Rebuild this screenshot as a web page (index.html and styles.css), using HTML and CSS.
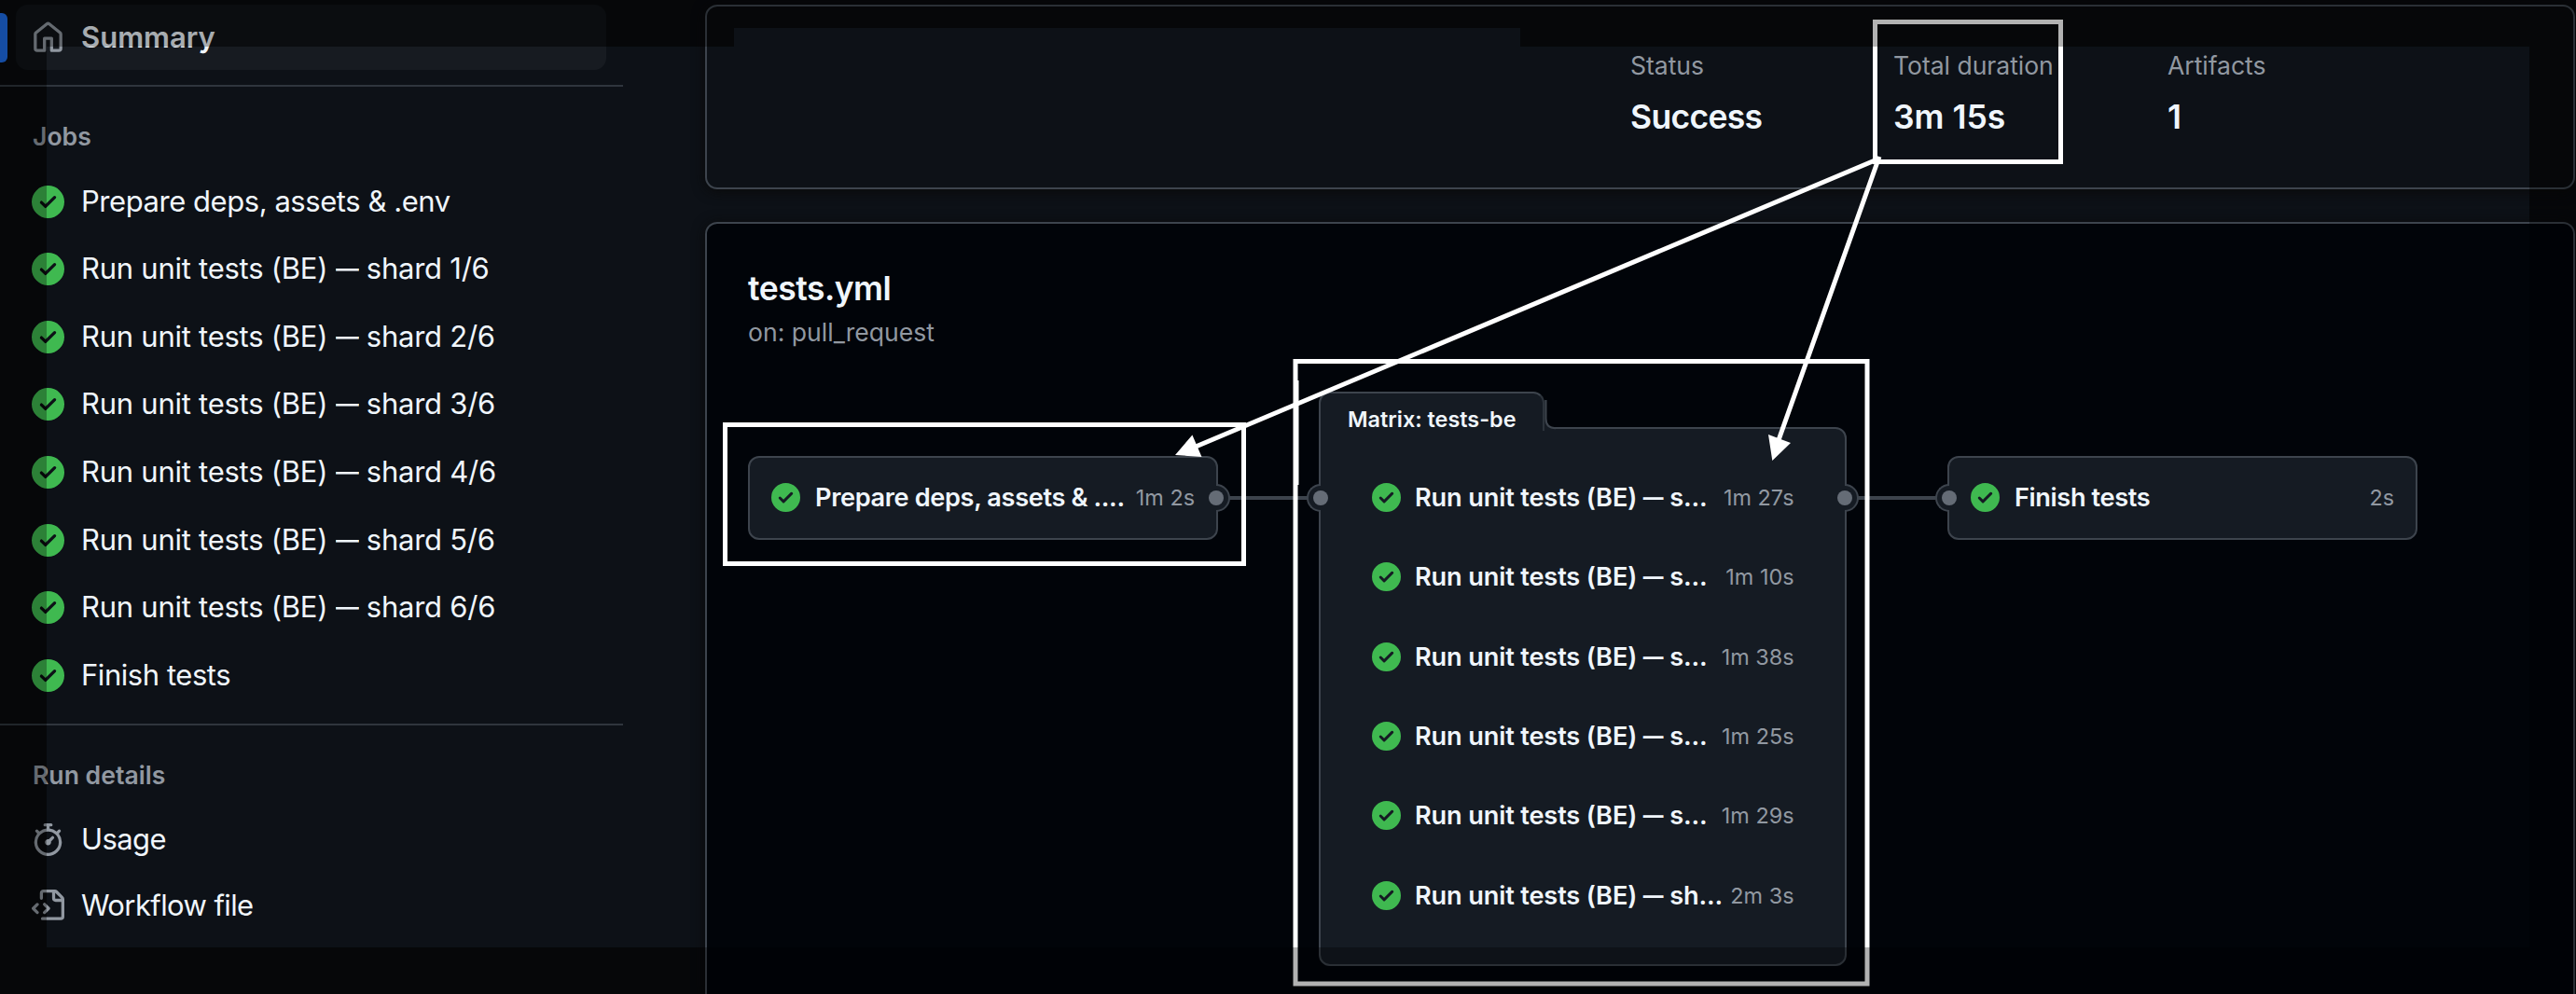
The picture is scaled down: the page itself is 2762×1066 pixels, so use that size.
FILE: index.html
```html
<!DOCTYPE html>
<html lang="en">
<head>
<meta charset="utf-8">
<title>Workflow run</title>
<link rel="stylesheet" href="styles.css">
</head>
<body>
<svg class="defs" aria-hidden="true">
  <symbol id="home" viewBox="0 0 16 16"><path d="M6.906.664a1.749 1.749 0 0 1 2.187 0l5.25 4.2c.415.332.657.835.657 1.367v7.019A1.75 1.75 0 0 1 13.25 15h-3.5a.75.75 0 0 1-.75-.75V9H7v5.25a.75.75 0 0 1-.75.75h-3.5A1.75 1.75 0 0 1 1 13.25V6.23c0-.531.242-1.034.657-1.366l5.25-4.2Zm1.25 1.171a.25.25 0 0 0-.312 0l-5.25 4.2a.25.25 0 0 0-.094.196v7.019c0 .138.112.25.25.25H5.5V8.25a.75.75 0 0 1 .75-.75h3.5a.75.75 0 0 1 .75.75v5.25h2.75a.25.25 0 0 0 .25-.25V6.23a.25.25 0 0 0-.094-.195Z"/></symbol>
  <symbol id="check" viewBox="0 0 16 16"><path d="M8 16A8 8 0 1 1 8 0a8 8 0 0 1 0 16Zm3.78-9.72a.751.751 0 0 0-.018-1.042.751.751 0 0 0-1.042-.018L6.75 9.19 5.28 7.72a.751.751 0 0 0-1.042.018.751.751 0 0 0-.018 1.042l2 2a.75.75 0 0 0 1.06 0Z"/></symbol>
  <symbol id="stopwatch" viewBox="0 0 16 16"><path d="M5.75.75A.75.75 0 0 1 6.5 0h3a.75.75 0 0 1 0 1.5h-.75v1l-.001.041a6.724 6.724 0 0 1 3.464 1.435l.007-.006.75-.75a.749.749 0 0 1 1.275.326.749.749 0 0 1-.215.734l-.75.75-.006.007a6.75 6.75 0 1 1-10.548 0L2.72 5.03l-.75-.75a.751.751 0 0 1 .018-1.042.751.751 0 0 1 1.042-.018l.75.75.007.006A6.72 6.72 0 0 1 7.25 2.541V1.5H6.5a.75.75 0 0 1-.75-.75ZM8 14.5a5.25 5.25 0 1 0-.001-10.501A5.25 5.25 0 0 0 8 14.5Zm.389-6.7 1.33-1.33a.75.75 0 1 1 1.061 1.06L9.45 8.861A1.503 1.503 0 0 1 8 10.75a1.499 1.499 0 1 1 .389-2.95Z"/></symbol>
  <symbol id="file-code" viewBox="0 0 16 16"><path d="M4 1.75C4 .784 4.784 0 5.75 0h5.586c.464 0 .909.184 1.237.513l2.914 2.914c.329.328.513.773.513 1.237v8.586A1.75 1.75 0 0 1 14.25 15h-9a.75.75 0 0 1 0-1.5h9a.25.25 0 0 0 .25-.25V6h-2.75A1.75 1.75 0 0 1 10 4.25V1.5H5.75a.25.25 0 0 0-.25.25v2.5a.75.75 0 0 1-1.5 0Zm1.72 4.97a.75.75 0 0 1 1.06 0l2 2a.75.75 0 0 1 0 1.06l-2 2a.749.749 0 0 1-1.275-.326.749.749 0 0 1 .215-.734l1.47-1.47-1.47-1.47a.75.75 0 0 1 0-1.06ZM3.28 7.78 1.81 9.25l1.47 1.47a.751.751 0 0 1-.018 1.042.751.751 0 0 1-1.042.018l-2-2a.75.75 0 0 1 0-1.06l2-2a.751.751 0 0 1 1.042.018.751.751 0 0 1 .018 1.042Zm8.22-6.218V4.25c0 .138.112.25.25.25h2.688l-.011-.013-2.914-2.914-.013-.011Z"/></symbol>
</svg>

<aside class="sidebar">
  <a class="summary"><svg class="icon"><use href="#home"/></svg><span>Summary</span></a>
  <hr class="rule">
  <h2 class="heading">Jobs</h2>
  <ul class="list jobs">
    <li><svg class="icon ok"><use href="#check"/></svg><span>Prepare deps, assets &amp; .env</span></li>
    <li class="shard"><svg class="icon ok"><use href="#check"/></svg><span>Run unit tests (BE) <b class="dash">—</b> shard 1/6</span></li>
    <li class="shard"><svg class="icon ok"><use href="#check"/></svg><span>Run unit tests (BE) <b class="dash">—</b> shard 2/6</span></li>
    <li class="shard"><svg class="icon ok"><use href="#check"/></svg><span>Run unit tests (BE) <b class="dash">—</b> shard 3/6</span></li>
    <li class="shard"><svg class="icon ok"><use href="#check"/></svg><span>Run unit tests (BE) <b class="dash">—</b> shard 4/6</span></li>
    <li class="shard"><svg class="icon ok"><use href="#check"/></svg><span>Run unit tests (BE) <b class="dash">—</b> shard 5/6</span></li>
    <li class="shard"><svg class="icon ok"><use href="#check"/></svg><span>Run unit tests (BE) <b class="dash">—</b> shard 6/6</span></li>
    <li><svg class="icon ok"><use href="#check"/></svg><span>Finish tests</span></li>
  </ul>
  <hr class="rule">
  <h2 class="heading">Run details</h2>
  <ul class="list details">
    <li><svg class="icon"><use href="#stopwatch"/></svg><span>Usage</span></li>
    <li><svg class="icon"><use href="#file-code"/></svg><span>Workflow file</span></li>
  </ul>
</aside>

<main class="main">
  <section class="card stats">
    <div class="stat"><div class="label">Status</div><div class="value tight">Success</div></div>
    <div class="stat"><div class="label">Total duration</div><div class="value">3m 15s</div></div>
    <div class="stat"><div class="label">Artifacts</div><div class="value">1</div></div>
  </section>

  <section class="card workflow">
    <h1 class="title">tests.yml</h1>
    <p class="trigger">on: pull_request</p>
  </section>
</main>

<div class="graph">
  <div class="link link-a"></div>
  <div class="link link-b"></div>
  <div class="node prepare">
    <i class="port right"></i>
    <div class="job"><svg class="icon ok"><use href="#check"/></svg><span class="name">Prepare deps, assets &amp; ....</span><span class="time">1m 2s</span></div>
  </div>
  <div class="node matrix">
    <div class="tab">Matrix: tests-be</div>
    <svg class="notch" viewBox="0 0 14 32"><path class="fill" d="M0 0H1V20Q1 30 12 30V32H0Z"/><path class="edge" d="M1.5 0V20Q1.5 30.2 12 30.2"/></svg>
    <i class="port left"></i><i class="port right"></i>
    <div class="job shard"><svg class="icon ok"><use href="#check"/></svg><span class="name">Run unit tests (BE) <b class="dash">—</b> s...</span><span class="time">1m 27s</span></div>
    <div class="job shard"><svg class="icon ok"><use href="#check"/></svg><span class="name">Run unit tests (BE) <b class="dash">—</b> s...</span><span class="time">1m 10s</span></div>
    <div class="job shard"><svg class="icon ok"><use href="#check"/></svg><span class="name">Run unit tests (BE) <b class="dash">—</b> s...</span><span class="time">1m 38s</span></div>
    <div class="job shard"><svg class="icon ok"><use href="#check"/></svg><span class="name">Run unit tests (BE) <b class="dash">—</b> s...</span><span class="time">1m 25s</span></div>
    <div class="job shard"><svg class="icon ok"><use href="#check"/></svg><span class="name">Run unit tests (BE) <b class="dash">—</b> s...</span><span class="time">1m 29s</span></div>
    <div class="job shard"><svg class="icon ok"><use href="#check"/></svg><span class="name">Run unit tests (BE) <b class="dash">—</b> sh...</span><span class="time">2m 3s</span></div>
  </div>
  <div class="node finish">
    <i class="port left"></i>
    <div class="job"><svg class="icon ok"><use href="#check"/></svg><span class="name">Finish tests</span><span class="time">2s</span></div>
  </div>
</div>

<svg class="marks" viewBox="0 0 2762 1066">
  <g fill="none" stroke="#fff" stroke-width="5">
    <rect x="2010.5" y="23.5" width="199" height="150"/>
    <rect x="777.5" y="455.5" width="556" height="149"/>
    <rect x="1389" y="387.5" width="613" height="667.5"/>
    <path d="M2015 170 1282 479M2015 168 1907 472"/>
    <path d="M1391.5 408V520" stroke-width="2"/>
  </g>
  <path fill="#fff" d="M1260 488 1278.4 466.5 1288.5 490ZM1900.3 494 1896 466 1920 475Z"/>
</svg>
<svg class="shade" viewBox="0 0 2762 1066"><path fill-rule="evenodd" d="M0 0H2762V1066H0ZM50 50V1016H2712V50H1630V30H787V50Z"/></svg>
</body>
</html>
```
FILE: styles.css
```css
* {
  box-sizing: border-box;
}

html {
  height: 1066px;
  overflow: hidden;
}

body {
  margin: 0;
  width: 2762px;
  height: 1066px;
  display: flex;
  position: relative;
  overflow: hidden;
  background:
    linear-gradient(#0d1117, #0d1117) 50px 50px / 2662px 966px no-repeat,
    linear-gradient(#0d1117, #0d1117) 787px 30px / 843px 20px no-repeat,
    #090b0e;
  color: #f0f6fc;
  font-family: Inter, "Liberation Sans", sans-serif;
  font-size: 31px;
}

.defs {
  position: absolute;
  width: 0;
  height: 0;
}

.icon {
  flex: none;
  width: 35px;
  height: 35px;
  fill: #9198a1;
}

.icon.ok {
  fill: #3fb950;
}

.sidebar {
  flex: none;
  width: 756px;
  padding-top: 5px;
}

.summary {
  position: relative;
  display: flex;
  align-items: center;
  gap: 18px;
  width: 633px;
  height: 70px;
  margin-left: 17px;
  padding-left: 17px;
  border-radius: 13px;
  background: linear-gradient(#171b21, #171b21) 33px 45px no-repeat #101418;
  font-weight: 600;
}

.summary span {
  padding-bottom: 1px;
}

.summary::before {
  content: "";
  position: absolute;
  left: -17px;
  top: 9px;
  width: 8px;
  height: 53px;
  border-radius: 0 6px 6px 0;
  background: #1f6feb;
}

.rule {
  width: 668px;
  height: 2px;
  margin: 16px 0 0;
  border: 0;
  background: #2f353d;
}

.jobs + .rule {
  margin-top: 15px;
}

.heading {
  margin: 0;
  padding: 35px 0 16px 35px;
  font-size: 26.6px;
  line-height: 36px;
  font-weight: 600;
  color: #9198a1;
}

.list {
  margin: 0;
  padding: 0 0 0 34px;
  list-style: none;
}

.list li {
  display: flex;
  align-items: center;
  gap: 18px;
  height: 72.57px;
  letter-spacing: -.45px;
}

.list li.shard {
  letter-spacing: -.25px;
}

.list li span {
  padding-bottom: 2px;
}

.list.details li {
  height: 71px;
  letter-spacing: -.6px;
}

/* Compact em dash, narrower than the font's own */
.dash {
  display: inline-block;
  margin: 0 -.1em;
  transform: scaleX(.8);
  font-weight: inherit;
}

.main {
  flex: none;
  width: 2005px;
  padding-top: 5px;
}

.card {
  border: 2px solid #3d444d;
  border-radius: 13px;
  box-shadow: 0 2px 14px #0a0a0a;
}

.stats {
  display: grid;
  grid-template-columns: 282px 294px 300px;
  height: 198px;
  padding: 43px 0 0 990px;
}

.label {
  font-size: 26.6px;
  line-height: 40px;
  letter-spacing: -.05px;
  color: #9198a1;
}

.value {
  margin-top: 11px;
  font-size: 35.5px;
  line-height: 50px;
  font-weight: 600;
}

.value.tight {
  letter-spacing: -.7px;
}

.workflow {
  height: 828px;
  margin-top: 35px;
  padding: 45px 0 0 44px;
  border-bottom: 0;
  border-radius: 13px 13px 0 0;
  background: #010409;
}

.title {
  margin: 0;
  font-size: 35.5px;
  line-height: 50px;
  font-weight: 600;
  letter-spacing: -.5px;
}

.trigger {
  margin: 1px 0 0;
  font-size: 26.6px;
  line-height: 40px;
  color: #9198a1;
}

.graph,
.marks,
.shade {
  position: absolute;
  left: 0;
  top: 0;
  width: 2762px;
  height: 1066px;
}

.shade {
  fill: #000;
  fill-opacity: .3;
}

.node {
  position: absolute;
  border: 2px solid #3d444d;
  border-radius: 12px;
  background: #151b23;
  font-size: 27.2px;
}

.prepare {
  left: 802px;
  top: 489px;
  width: 504px;
  height: 90px;
  padding: 0 23px;
}

.matrix {
  left: 1414px;
  top: 458px;
  width: 566px;
  height: 578px;
  padding: 31px 54.5px 0;
  border-top-left-radius: 0;
}

.finish {
  left: 2088px;
  top: 489px;
  width: 504px;
  height: 90px;
  padding: 0 23px;
}

.job {
  position: relative;
  display: flex;
  align-items: center;
  height: 85.3px;
}

.job .icon {
  width: 31px;
  height: 31px;
}

.name {
  flex: 1;
  margin-left: 16px;
  font-weight: 600;
  letter-spacing: -.38px;
  white-space: nowrap;
}

.shard .name {
  margin-left: 15.5px;
  letter-spacing: -.16px;
}

.time {
  font-size: 23.4px;
  color: #9198a1;
  white-space: nowrap;
}

.tab {
  position: absolute;
  left: -2px;
  top: -40px;
  width: 242px;
  height: 42px;
  padding-left: 29px;
  border: 2px solid #3d444d;
  border-bottom: 0;
  border-right-color: #2c333b;
  border-radius: 12px 12px 0 0;
  background: #151b23;
  font-size: 23.4px;
  line-height: 56px;
  font-weight: 600;
}

.notch {
  position: absolute;
  left: 240px;
  top: -31px;
  width: 14px;
  height: 32px;
}

.notch .fill {
  fill: #151b23;
}

.notch .edge {
  fill: none;
  stroke: #3d444d;
  stroke-width: 2;
}

.port {
  position: absolute;
  top: 28px;
  width: 15px;
  height: 30px;
  border: 2px solid #3d444d;
  background: #151b23;
}

.port.left {
  left: -15px;
  border-right: 0;
  border-radius: 15px 0 0 15px;
}

.port.right {
  right: -15px;
  border-left: 0;
  border-radius: 0 15px 15px 0;
}

.matrix .port {
  top: 59px;
}

.port::after {
  content: "";
  position: absolute;
  top: 5px;
  width: 16px;
  height: 16px;
  border-radius: 50%;
  background: #656c76;
}

.port.left::after {
  left: 5px;
}

.port.right::after {
  right: 5px;
}

.link {
  position: absolute;
  top: 532px;
  height: 4px;
  background: #3d444d;
}

.link-a {
  left: 1318px;
  width: 84px;
}

.link-b {
  left: 1992px;
  width: 84px;
}
```
